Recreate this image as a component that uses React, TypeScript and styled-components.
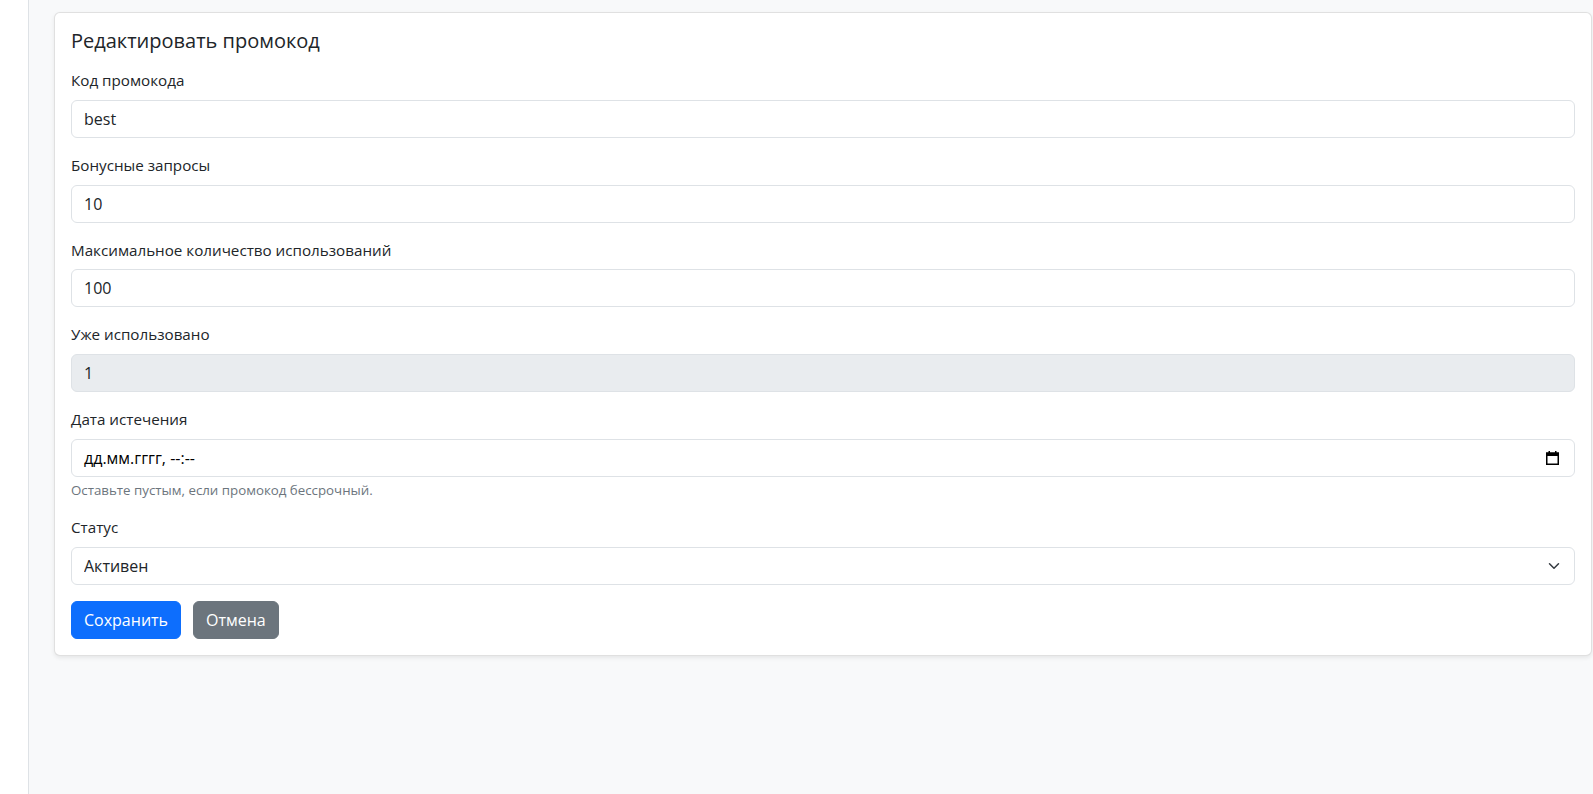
import React from "react";
import styled, { createGlobalStyle } from "styled-components";

const Global = createGlobalStyle`
  html, body { margin: 0; padding: 0; }
  body {
    font-family: "Open Sans", "Noto Sans", sans-serif;
    font-size: 16px;
    line-height: 1.5;
    color: #212529;
    background: #f8f9fa;
  }
  * { box-sizing: border-box; }
`;

const Layout = styled.div`
  display: flex;
  min-height: 794px;
`;

const Sidebar = styled.aside`
  width: 29px;
  flex-shrink: 0;
  background: #ffffff;
  border-right: 1px solid #dee2e6;
`;

const Main = styled.main`
  flex: 1;
  padding: 12px 1px 0 25px;
  background: #f8f9fa;
`;

const Card = styled.div`
  background: #fff;
  border: 1px solid rgba(0, 0, 0, 0.12);
  border-radius: 6px;
  box-shadow: 0 2px 4px rgba(0, 0, 0, 0.075);
  padding: 16px;
`;

const Title = styled.h5`
  margin: 0 0 16px;
  font-size: 20px;
  font-weight: 400;
  line-height: 1.2;
`;

const Field = styled.div`
  margin-bottom: 16px;
  font-size: 15.2px;
`;

const Label = styled.label`
  display: block;
  margin-bottom: 8px;
  font-size: 15.2px;
  line-height: 1.5;
`;

const Input = styled.input<{ $disabled?: boolean }>`
  display: block;
  width: 100%;
  height: 38px;
  padding: 6px 12px;
  font: inherit;
  font-size: 16px;
  color: #212529;
  background: ${(p) => (p.$disabled ? "#e9ecef" : "#fff")};
  border: 1px solid #dee2e6;
  border-radius: 6px;
  outline: none;
`;

const Control = styled.div`
  display: flex;
  align-items: center;
  height: 38px;
  padding: 0 12px;
  background: #fff;
  border: 1px solid #dee2e6;
  border-radius: 6px;
`;

const ControlText = styled.span`
  flex: 1;
  font-size: 16px;
  color: #000;
`;

const Select = styled.select`
  flex: 1;
  appearance: none;
  border: none;
  background: transparent;
  font: inherit;
  font-size: 16px;
  color: #212529;
  padding: 0;
  outline: none;
`;

const IconSlot = styled.span<{ $mr: number }>`
  display: flex;
  margin-right: ${(p) => p.$mr}px;
`;

const Help = styled.div`
  margin-top: 4px;
  font-size: 0.875em;
  line-height: 19px;
  color: #6c757d;
`;

const Buttons = styled.div`
  display: flex;
  gap: 12px;
`;

const Button = styled.button<{ $variant: "primary" | "secondary" }>`
  height: 38px;
  padding: 6px 12px;
  font: inherit;
  font-size: 16px;
  color: #fff;
  border: 1px solid ${(p) => (p.$variant === "primary" ? "#0d6efd" : "#6c757d")};
  background: ${(p) => (p.$variant === "primary" ? "#0d6efd" : "#6c757d")};
  border-radius: 6px;
  cursor: pointer;
`;

const CalendarIcon = () => (
  <svg width="13" height="14" viewBox="0 0 13 14">
    <rect x="0" y="1.5" width="13" height="3.5" fill="#000" />
    <rect x="2.5" y="0" width="1.5" height="2" fill="#000" />
    <rect x="9" y="0" width="1.5" height="2" fill="#000" />
    <rect x="0.75" y="2.25" width="11.5" height="11" fill="none" stroke="#000" strokeWidth="1.5" />
  </svg>
);

const Chevron = () => (
  <svg width="16" height="12" viewBox="0 0 16 16">
    <path d="m2 5 6 6 6-6" fill="none" stroke="#343a40" strokeWidth="2" strokeLinecap="round" strokeLinejoin="round" />
  </svg>
);

export default function App() {
  return (
    <>
      <Global />
      <Layout>
        <Sidebar />
        <Main>
          <Card>
            <Title>Редактировать промокод</Title>
            <Field>
              <Label>Код промокода</Label>
              <Input readOnly value="best" />
            </Field>
            <Field>
              <Label>Бонусные запросы</Label>
              <Input readOnly value="10" />
            </Field>
            <Field>
              <Label>Максимальное количество использований</Label>
              <Input readOnly value="100" />
            </Field>
            <Field>
              <Label>Уже использовано</Label>
              <Input readOnly $disabled value="1" />
            </Field>
            <Field>
              <Label>Дата истечения</Label>
              <Control>
                <ControlText>дд.мм.гггг, --:--</ControlText>
                <IconSlot $mr={3}>
                  <CalendarIcon />
                </IconSlot>
              </Control>
              <Help>Оставьте пустым, если промокод бессрочный.</Help>
            </Field>
            <Field>
              <Label>Статус</Label>
              <Control>
                <Select defaultValue="active">
                  <option value="active">Активен</option>
                  <option value="inactive">Неактивен</option>
                </Select>
                <IconSlot $mr={0}>
                  <Chevron />
                </IconSlot>
              </Control>
            </Field>
            <Buttons>
              <Button $variant="primary">Сохранить</Button>
              <Button $variant="secondary">Отмена</Button>
            </Buttons>
          </Card>
        </Main>
      </Layout>
    </>
  );
}
